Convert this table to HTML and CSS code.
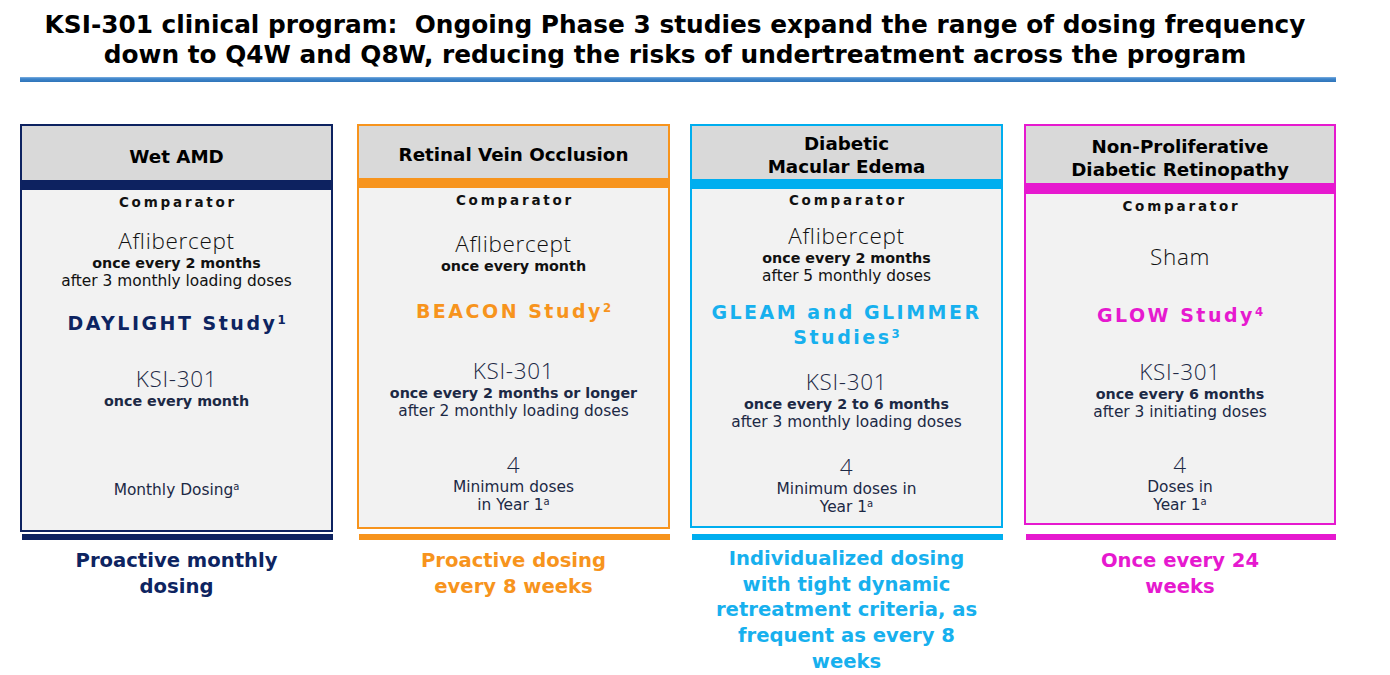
FILE: index.html
```html
<!DOCTYPE html>
<html lang="en">
<head>
<meta charset="utf-8">
<title>KSI-301 clinical program</title>
<link rel="stylesheet" href="styles.css">
</head>
<body>
<div class="page">
  <h1 class="title"><span class="title-line">KSI-301 clinical program:&nbsp; Ongoing Phase 3 studies expand the range of dosing frequency</span><span class="title-line">down to Q4W and Q8W, reducing the risks of undertreatment across the program</span></h1>
  <div class="rule"></div>

  <div class="cards">
    <!-- Card 1 -->
    <div class="col c1">
      <div class="card-slot">
        <div class="card">
          <div class="card-head">Wet AMD</div>
          <div class="card-bar"></div>
          <div class="card-body">
            <div class="label">Comparator</div>
            <div class="block comp">
              <div class="name">Aflibercept</div>
              <div class="sub strong">once every 2 months</div>
              <div class="sub">after 3 monthly loading doses</div>
            </div>
            <div class="study">DAYLIGHT Study<sup>1</sup></div>
            <div class="block ksi">
              <div class="name">KSI-301</div>
              <div class="sub strong">once every month</div>
            </div>
            <div class="block doses">
              <div class="sub">Monthly Dosing<sup>a</sup></div>
            </div>
          </div>
        </div>
      </div>
      <div class="under-bar"></div>
      <p class="tagline">Proactive monthly<br>dosing</p>
    </div>

    <!-- Card 2 -->
    <div class="col c2">
      <div class="card-slot">
        <div class="card">
          <div class="card-head">Retinal Vein Occlusion</div>
          <div class="card-bar"></div>
          <div class="card-body">
            <div class="label">Comparator</div>
            <div class="block comp">
              <div class="name">Aflibercept</div>
              <div class="sub strong">once every month</div>
            </div>
            <div class="study">BEACON Study<sup>2</sup></div>
            <div class="block ksi">
              <div class="name">KSI-301</div>
              <div class="sub strong">once every 2 months or longer</div>
              <div class="sub">after 2 monthly loading doses</div>
            </div>
            <div class="block doses">
              <div class="name">4</div>
              <div class="sub">Minimum doses</div>
              <div class="sub">in Year 1<sup>a</sup></div>
            </div>
          </div>
        </div>
      </div>
      <div class="under-bar"></div>
      <p class="tagline">Proactive dosing<br>every 8 weeks</p>
    </div>

    <!-- Card 3 -->
    <div class="col c3">
      <div class="card-slot">
        <div class="card">
          <div class="card-head">Diabetic<br>Macular Edema</div>
          <div class="card-bar"></div>
          <div class="card-body">
            <div class="label">Comparator</div>
            <div class="block comp">
              <div class="name">Aflibercept</div>
              <div class="sub strong">once every 2 months</div>
              <div class="sub">after 5 monthly doses</div>
            </div>
            <div class="study">GLEAM and GLIMMER<br>Studies<sup>3</sup></div>
            <div class="block ksi">
              <div class="name">KSI-301</div>
              <div class="sub strong">once every 2 to 6 months</div>
              <div class="sub">after 3 monthly loading doses</div>
            </div>
            <div class="block doses">
              <div class="name">4</div>
              <div class="sub">Minimum doses in</div>
              <div class="sub">Year 1<sup>a</sup></div>
            </div>
          </div>
        </div>
      </div>
      <div class="under-bar"></div>
      <p class="tagline">Individualized dosing<br>with tight dynamic<br>retreatment criteria, as<br>frequent as every 8<br>weeks</p>
    </div>

    <!-- Card 4 -->
    <div class="col c4">
      <div class="card-slot">
        <div class="card">
          <div class="card-head">Non-Proliferative<br>Diabetic Retinopathy</div>
          <div class="card-bar"></div>
          <div class="card-body">
            <div class="label">Comparator</div>
            <div class="block comp">
              <div class="name">Sham</div>
            </div>
            <div class="study">GLOW Study<sup>4</sup></div>
            <div class="block ksi">
              <div class="name">KSI-301</div>
              <div class="sub strong">once every 6 months</div>
              <div class="sub">after 3 initiating doses</div>
            </div>
            <div class="block doses">
              <div class="name">4</div>
              <div class="sub">Doses in</div>
              <div class="sub">Year 1<sup>a</sup></div>
            </div>
          </div>
        </div>
      </div>
      <div class="under-bar"></div>
      <p class="tagline">Once every 24<br>weeks</p>
    </div>
  </div>
</div>
</body>
</html>
```

FILE: styles.css
```css
* { box-sizing: border-box; }

html, body {
  margin: 0;
  padding: 0;
  background: #ffffff;
}

body {
  font-family: "DejaVu Sans", "Open Sans", sans-serif;
  color: #000;
}

.page {
  width: 1316px;
  margin-left: 20px;
}

.title {
  margin: 0;
  padding: 10px 6px 0 0;
  font-size: 24.8px;
  line-height: 30px;
  font-weight: 700;
  text-align: center;
  color: #000;
}
.title-line {
  display: block;
  white-space: nowrap;
}

.rule {
  margin-top: 7px;
  height: 5px;
  background: linear-gradient(#7fb0e0 0%, #3f86cc 35%, #2f74b9 100%);
}

.cards {
  display: flex;
  margin-top: 42px;
}

.col {
  width: 313px;
  display: flex;
  flex-direction: column;
}
.c1 { --accent: #0d2260; --study: #0d2461; }
.c2 { --accent: #f7941d; --study: #f7941d; margin-left: 24px; }
.c3 { --accent: #00aeef; --study: #17b0ee; margin-left: 20px; }
.c4 { --accent: #e619cf; --study: #e619cf; margin-left: 21px; width: 312px; }

.card-slot {
  height: 410px;
}

.card {
  border: 2px solid var(--accent);
  display: flex;
  flex-direction: column;
  background: #f2f2f2;
}
.c1 .card { height: 408px; }
.c2 .card { height: 405px; }
.c3 .card { height: 404px; }
.c4 .card { height: 401px; }

.card-head {
  background: #d9d9d9;
  display: flex;
  align-items: center;
  justify-content: center;
  text-align: center;
  font-weight: 700;
  font-size: 18.3px;
  line-height: 23px;
  color: #000;
}
.c1 .card-head { height: 54px; padding-top: 6px; }
.c2 .card-head { height: 52px; padding-top: 4px; }
.c3 .card-head { height: 53px; padding-top: 4px; }
.c4 .card-head { height: 57px; padding-top: 6px; }

.card-bar {
  height: 10px;
  background: var(--accent);
}
.c4 .card-bar { height: 11px; }

.card-body {
  flex: 1;
  text-align: center;
}

.label {
  font-weight: 700;
  font-size: 13.5px;
  line-height: 18px;
  letter-spacing: 2.8px;
  color: #111;
  margin-top: 3px;
  padding-left: 3px;
}

.name {
  font-family: "Open Sans", "DejaVu Sans", sans-serif;
  font-weight: 300;
  font-size: 22.5px;
  line-height: 26px;
  letter-spacing: 0.7px;
  color: #111;
}
.sub {
  font-size: 15.4px;
  line-height: 18px;
  color: #111;
}
.sub.strong {
  font-weight: 700;
  font-size: 14.3px;
}
.ksi .name, .ksi .sub, .doses .name, .doses .sub {
  color: #1c2945;
}

sup {
  font-size: 62%;
  line-height: 0;
  vertical-align: 0.55em;
}
.sub sup {
  font-size: 65%;
  vertical-align: 0.5em;
}

.study {
  font-weight: 700;
  font-size: 19px;
  line-height: 26px;
  letter-spacing: 2.5px;
  color: var(--study);
}
.study sup {
  letter-spacing: 0;
}

/* vertical rhythm per card */
.c1 .comp { margin-top: 17px; }
.c1 .study { margin-top: 20px; }
.c1 .ksi { margin-top: 30px; }
.c1 .doses { margin-top: 71px; }

.c2 .comp { margin-top: 22px; }
.c2 .study { margin-top: 23px; }
.c2 .ksi { margin-top: 34px; }
.c2 .doses { margin-top: 32px; }

.c3 .label { margin-top: 2px; }
.c3 .comp { margin-top: 14px; }
.c3 .study { margin-top: 15px; line-height: 25px; }
.c3 .ksi { margin-top: 19px; }
.c3 .doses { margin-top: 23px; }

.c4 .comp { margin-top: 29px; }
.c4 .study { margin-top: 32px; }
.c4 .ksi { margin-top: 31px; }
.c4 .doses { margin-top: 31px; }

.under-bar {
  height: 6px;
  background: var(--accent);
  margin-left: 2px;
}

.tagline {
  margin: 8px 0 0;
  text-align: center;
  font-weight: 700;
  font-size: 19.6px;
  line-height: 26px;
  color: var(--study);
}
.c1 .tagline { color: #0d2461; }
.c3 .tagline { line-height: 25.7px; margin-top: 6px; }
```
